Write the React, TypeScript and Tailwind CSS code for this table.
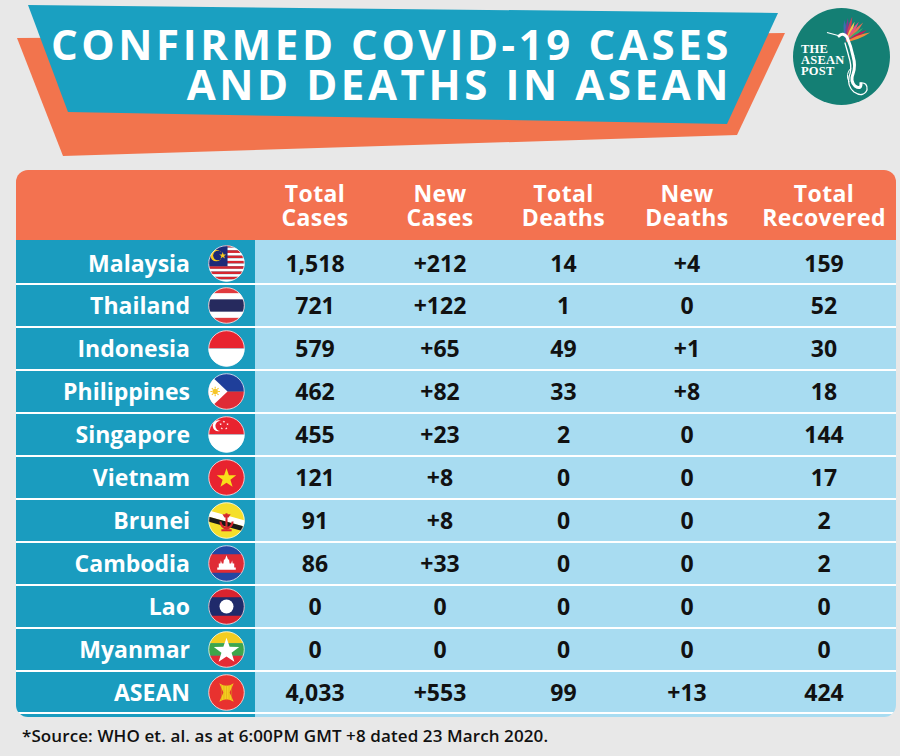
import React from "react";

type Row = {
  name: string;
  flag: string;
  total: string;
  newCases: string;
  deaths: string;
  newDeaths: string;
  recovered: string;
};

const rows: Row[] = [
  { name: "Malaysia", flag: "my", total: "1,518", newCases: "+212", deaths: "14", newDeaths: "+4", recovered: "159" },
  { name: "Thailand", flag: "th", total: "721", newCases: "+122", deaths: "1", newDeaths: "0", recovered: "52" },
  { name: "Indonesia", flag: "id", total: "579", newCases: "+65", deaths: "49", newDeaths: "+1", recovered: "30" },
  { name: "Philippines", flag: "ph", total: "462", newCases: "+82", deaths: "33", newDeaths: "+8", recovered: "18" },
  { name: "Singapore", flag: "sg", total: "455", newCases: "+23", deaths: "2", newDeaths: "0", recovered: "144" },
  { name: "Vietnam", flag: "vn", total: "121", newCases: "+8", deaths: "0", newDeaths: "0", recovered: "17" },
  { name: "Brunei", flag: "bn", total: "91", newCases: "+8", deaths: "0", newDeaths: "0", recovered: "2" },
  { name: "Cambodia", flag: "kh", total: "86", newCases: "+33", deaths: "0", newDeaths: "0", recovered: "2" },
  { name: "Lao", flag: "la", total: "0", newCases: "0", deaths: "0", newDeaths: "0", recovered: "0" },
  { name: "Myanmar", flag: "mm", total: "0", newCases: "0", deaths: "0", newDeaths: "0", recovered: "0" },
  { name: "ASEAN", flag: "asean", total: "4,033", newCases: "+553", deaths: "99", newDeaths: "+13", recovered: "424" },
];

function star(cx: number, cy: number, r: number) {
  const pts: string[] = [];
  for (let i = 0; i < 10; i++) {
    const rad = i % 2 === 0 ? r : r * 0.4;
    const a = -Math.PI / 2 + (i * Math.PI) / 5;
    pts.push(`${(cx + rad * Math.cos(a)).toFixed(2)},${(cy + rad * Math.sin(a)).toFixed(2)}`);
  }
  return pts.join(" ");
}

function FlagArt({ kind }: { kind: string }) {
  switch (kind) {
    case "my":
      return (
        <g>
          {Array.from({ length: 14 }).map((_, i) => (
            <rect key={i} x="0" y={i * 2.58} width="36" height="2.6" fill={i % 2 === 0 ? "#d6262f" : "#ffffff"} />
          ))}
          <rect x="0" y="0" width="19" height="20.6" fill="#1d2a78" />
          <circle cx="8" cy="10.3" r="5.6" fill="#f7c81e" />
          <circle cx="9.6" cy="10.3" r="4.6" fill="#1d2a78" />
          <polygon points={star(14.3, 10.3, 3.6)} fill="#f7c81e" />
        </g>
      );
    case "th":
      return (
        <g>
          <rect x="0" y="0" width="36" height="36" fill="#e03a3e" />
          <rect x="0" y="6" width="36" height="24" fill="#ffffff" />
          <rect x="0" y="12" width="36" height="12" fill="#262a5e" />
        </g>
      );
    case "id":
      return (
        <g>
          <rect x="0" y="0" width="36" height="18" fill="#e8232f" />
          <rect x="0" y="18" width="36" height="18" fill="#ffffff" />
        </g>
      );
    case "ph":
      return (
        <g>
          <rect x="0" y="0" width="36" height="18" fill="#1f3f9a" />
          <rect x="0" y="18" width="36" height="18" fill="#df2b35" />
          <polygon points="0,0 19,18 0,36" fill="#ffffff" />
          <circle cx="7" cy="18" r="2.6" fill="#f6c526" />
          {Array.from({ length: 8 }).map((_, i) => {
            const a = (i * Math.PI) / 4;
            return (
              <line key={i} x1={7 + 2.8 * Math.cos(a)} y1={18 + 2.8 * Math.sin(a)} x2={7 + 4.6 * Math.cos(a)} y2={18 + 4.6 * Math.sin(a)} stroke="#f6c526" strokeWidth="1.1" />
            );
          })}
        </g>
      );
    case "sg":
      return (
        <g>
          <rect x="0" y="0" width="36" height="18" fill="#e8232f" />
          <rect x="0" y="18" width="36" height="18" fill="#ffffff" />
          <circle cx="10" cy="9.5" r="5.4" fill="#ffffff" />
          <circle cx="12.2" cy="9.5" r="5" fill="#e8232f" />
          <polygon points={star(15.5, 5.6, 1.3)} fill="#ffffff" />
          <polygon points={star(19, 8, 1.3)} fill="#ffffff" />
          <polygon points={star(17.8, 12, 1.3)} fill="#ffffff" />
          <polygon points={star(13.4, 12, 1.3)} fill="#ffffff" />
          <polygon points={star(12.3, 8, 1.3)} fill="#ffffff" />
        </g>
      );
    case "vn":
      return (
        <g>
          <rect x="0" y="0" width="36" height="36" fill="#e8232f" />
          <polygon points={star(18, 19, 10)} fill="#f8de1a" />
        </g>
      );
    case "bn":
      return (
        <g>
          <rect x="0" y="0" width="36" height="36" fill="#f5df2b" />
          <polygon points="0,8 36,18 36,24 0,14" fill="#ffffff" />
          <polygon points="0,14 36,24 36,29 0,19" fill="#1a1a1a" />
          <path d="M11 19 Q12 26 18 27 Q24 26 25 19 L23 19 Q22 24 18 24.5 Q14 24 13 19 Z" fill="#d6262f" />
          <rect x="17" y="11" width="2" height="14" fill="#d6262f" />
          <path d="M14 12 L22 12 L20 15 L16 15 Z" fill="#d6262f" />
          <rect x="13" y="26.5" width="10" height="2" fill="#d6262f" />
        </g>
      );
    case "kh":
      return (
        <g>
          <rect x="0" y="0" width="36" height="36" fill="#2446a3" />
          <rect x="0" y="9" width="36" height="18" fill="#df2b35" />
          <path d="M9 24 L27 24 L27 22 L25.5 22 L25.5 18 L24 18 L23.5 15 L22.5 18 L21 18 L20.5 14 L19.5 14 L18 10 L16.5 14 L15.5 14 L15 18 L13.5 18 L12.5 15 L12 18 L10.5 18 L10.5 22 L9 22 Z" fill="#ffffff" />
        </g>
      );
    case "la":
      return (
        <g>
          <rect x="0" y="0" width="36" height="36" fill="#d8232f" />
          <rect x="0" y="9" width="36" height="18" fill="#1f2a6b" />
          <circle cx="18" cy="18" r="6.8" fill="#ffffff" />
        </g>
      );
    case "mm":
      return (
        <g>
          <rect x="0" y="0" width="36" height="12" fill="#f4cd1f" />
          <rect x="0" y="12" width="36" height="12" fill="#3ea64a" />
          <rect x="0" y="24" width="36" height="12" fill="#e32b35" />
          <polygon points={star(18, 19.5, 13)} fill="#ffffff" />
        </g>
      );
    default:
      return (
        <g>
          <rect x="0" y="0" width="36" height="36" fill="#e8322f" />
          <path d="M11 9 Q18 14 25 9 L21 18 L25 27 Q18 22 11 27 L15 18 Z" fill="#f4cd1f" />
          {[13, 15.5, 18, 20.5, 23].map((x) => (
            <line key={x} x1={x} y1="10.5" x2={x} y2="25.5" stroke="#d8a515" strokeWidth="0.5" />
          ))}
        </g>
      );
  }
}

function Flag({ kind }: { kind: string }) {
  const id = `clip-${kind}`;
  return (
    <svg width="37" height="37" viewBox="0 0 36 36" className="shrink-0">
      <defs>
        <clipPath id={id}>
          <circle cx="18" cy="18" r="17.5" />
        </clipPath>
      </defs>
      <g clipPath={`url(#${id})`}>
        <FlagArt kind={kind} />
      </g>
      <circle cx="18" cy="18" r="17.3" fill="none" stroke="#ffffff" strokeOpacity="0.8" strokeWidth="0.9" />
    </svg>
  );
}

function Logo() {
  const feathers = ["#3a6fb0", "#7a3f8f", "#d23a5a", "#f2c94c", "#e84f8a", "#e76f51", "#3fa66b", "#c2185b", "#f08a3c"];
  return (
    <svg width="97" height="97" viewBox="0 0 97 97">
      <circle cx="48.5" cy="48.5" r="48.5" fill="#147f74" />
      {feathers.map((c, i) => {
        const a = -1.65 + i * 0.16;
        const len = 22 + (i % 3) * 2;
        const bx = 53;
        const by = 34;
        const x = bx + len * Math.cos(a);
        const y = by + len * Math.sin(a);
        const nx = -Math.sin(a) * 3;
        const ny = Math.cos(a) * 3;
        const mx = (bx + x) / 2;
        const my = (by + y) / 2;
        return (
          <path
            key={i}
            d={`M${bx} ${by} Q${(mx - nx).toFixed(1)} ${(my - ny).toFixed(1)} ${x.toFixed(1)} ${y.toFixed(1)} Q${(mx + nx).toFixed(1)} ${(my + ny).toFixed(1)} ${bx} ${by} Z`}
            fill={c}
          />
        );
      })}
      <line x1="34" y1="24.5" x2="47" y2="28" stroke="#ffffff" strokeWidth="1.2" />
      <path d="M46 28 Q50 24 54 29 Q58 38 60 48 Q63 58 60 66 Q57 73 62 78 Q68 82 68 76" fill="none" stroke="#ffffff" strokeWidth="3" strokeLinecap="round" />
      <path d="M52 35 Q55 45 57 53 Q59 61 56 69 Q54 78 61 84 Q70 90 74 82 Q75 74 67 75" fill="none" stroke="#ffffff" strokeWidth="1.3" strokeLinecap="round" />
      <path d="M58 60 Q52 66 56 74" fill="none" stroke="#ffffff" strokeWidth="1" />
      <text x="8" y="45" fill="#ffffff" fontFamily="'Liberation Serif', serif" fontWeight="700" fontSize="12.5" letterSpacing="0.2">THE</text>
      <text x="8" y="56" fill="#ffffff" fontFamily="'Liberation Serif', serif" fontWeight="700" fontSize="12.5" letterSpacing="0.2">ASEAN</text>
      <text x="8" y="67" fill="#ffffff" fontFamily="'Liberation Serif', serif" fontWeight="700" fontSize="12.5" letterSpacing="0.2">POST</text>
    </svg>
  );
}

const cols = "grid grid-cols-[239px_120px_130px_117px_130px_144px]";

export default function App() {
  const cell = "flex items-center justify-center text-[23px] font-bold text-[#111111]";
  return (
    <div className="w-[900px] h-[756px] bg-[#e8e8e8] font-['Open_Sans',sans-serif] overflow-hidden">
      {/* Title banner */}
      <header className="relative h-[170px]">
        <svg className="absolute inset-0" width="900" height="170" viewBox="0 0 900 170">
          <polygon points="17,38 785,33 737,135 63,156" fill="#f2744d" />
          <polygon points="28,5 778,13 727,124 68,112" fill="#1aa0c1" />
        </svg>
        <div className="relative flex flex-col items-end pr-[168px] pt-[24px] text-white font-bold text-[42px] leading-[40px] tracking-[3.6px]">
          <span>CONFIRMED COVID-19 CASES</span>
          <span>AND DEATHS IN ASEAN</span>
        </div>
        <div className="absolute left-[793px] top-[8px]">
          <Logo />
        </div>
      </header>

      {/* Table */}
      <section className="mx-[16px] w-[880px] rounded-[12px] overflow-hidden">
        <div className={`${cols} h-[70px] bg-[#f37250] text-white text-[23px] font-bold leading-[24px] tracking-[0.4px]`}>
          <div />
          <div className="flex flex-col items-center justify-center"><span>Total</span><span>Cases</span></div>
          <div className="flex flex-col items-center justify-center"><span>New</span><span>Cases</span></div>
          <div className="flex flex-col items-center justify-center"><span>Total</span><span>Deaths</span></div>
          <div className="flex flex-col items-center justify-center"><span>New</span><span>Deaths</span></div>
          <div className="flex flex-col items-center justify-center"><span>Total</span><span>Recovered</span></div>
        </div>
        {rows.map((r, i) => (
          <div
            key={r.name}
            className={`${cols} border-b-2 border-white bg-[#a8dcf1] ${i === 0 ? "h-[45px] pt-[3px]" : i === rows.length - 1 ? "h-[42px]" : "h-[43px]"}`}
          >
            <div className={`flex items-center justify-end gap-[18px] pr-[10px] bg-[#1a9cbf] ${i === 0 ? "-mt-[3px] pt-[3px]" : ""}`}>
              <span className="text-white text-[23px] font-bold">{r.name}</span>
              <Flag kind={r.flag} />
            </div>
            <div className={cell}>{r.total}</div>
            <div className={cell}>{r.newCases}</div>
            <div className={cell}>{r.deaths}</div>
            <div className={cell}>{r.newDeaths}</div>
            <div className={cell}>{r.recovered}</div>
          </div>
        ))}
        <div className="grid grid-cols-[239px_641px] h-[3px]">
          <div className="bg-[#1a9cbf]" />
          <div className="bg-[#a8dcf1]" />
        </div>
      </section>

      <p className="mt-[6px] pl-[22px] text-[17px] font-semibold tracking-[0.1px] text-[#111111]">
        *Source: WHO et. al. as at 6:00PM GMT +8 dated 23 March 2020.
      </p>
    </div>
  );
}
